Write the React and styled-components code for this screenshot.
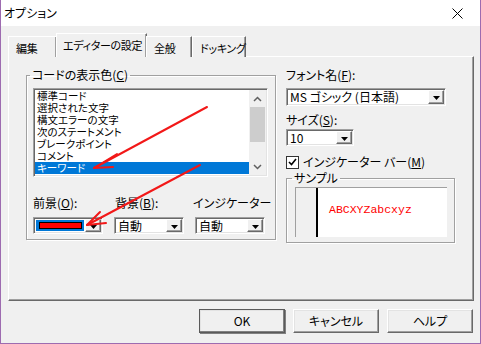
import React from "react";
import styled, { createGlobalStyle, css } from "styled-components";

const GlobalStyle = createGlobalStyle`
  body {
    margin: 0;
    overflow: hidden;
    background: #f0f0f0;
  }
`;

const uiFont = css`
  font-family: "Noto Sans CJK JP", "Noto Sans", sans-serif;
  font-feature-settings: "palt";
  font-size: 12px;
  line-height: 14px;
  color: #000;
`;

const Window = styled.div`
  position: relative;
  width: 481px;
  height: 344px;
  box-sizing: border-box;
  border: 1px solid #9d6bb0;
  border-top: none;
  background: #f0f0f0;
  display: flex;
  flex-direction: column;
  ${uiFont}
`;

const TitleBar = styled.div`
  height: 26px;
  flex: none;
  background: #fff;
  display: flex;
  align-items: center;
  justify-content: space-between;
  padding-left: 3px;
`;

const Title = styled.span`
  font-size: 12px;
`;

const Close = styled.div`
  width: 45px;
  height: 26px;
  display: flex;
  align-items: center;
  justify-content: center;
`;

const Body = styled.div`
  flex: 1;
  display: flex;
  flex-direction: column;
  padding: 7px 6px 0 7px;
`;

const TabRow = styled.div`
  display: flex;
  align-items: flex-end;
  height: 24px;
  margin-bottom: -1px;
  position: relative;
  z-index: 1;
`;

const Tab = styled.div`
  box-sizing: border-box;
  flex: none;
  width: ${(p) => p.$w}px;
  height: ${(p) => (p.$active ? 24 : 21)}px;
  margin: ${(p) => (p.$active ? "0 -1px" : "0")};
  background: #f0f0f0;
  border-top: 1px solid #fff;
  border-left: 1px solid #fff;
  border-right: 1px solid #696969;
  box-shadow: inset -1px 0 #a0a0a0;
  display: flex;
  align-items: ${(p) => (p.$active ? "flex-start" : "center")};
  padding-top: ${(p) => (p.$active ? 4 : 2)}px;
  padding-left: ${(p) => (p.$active ? 6 : 7)}px;
  white-space: nowrap;
  font-size: 11px;
  letter-spacing: -0.3px;
`;

const Panel = styled.div`
  box-sizing: border-box;
  height: 245px;
  border: 1px solid;
  border-color: #fff #696969 #696969 #fff;
  box-shadow: inset -1px -1px #a0a0a0;
  padding: 11px 0 0 17px;
  display: grid;
  grid-template-columns: 250px 170px;
  column-gap: 9px;
  align-items: start;
`;

const Group = styled.fieldset`
  margin: 0;
  min-width: 0;
  box-sizing: border-box;
  border: 1px solid #a0a0a0;
  box-shadow: inset 1px 1px #fff, 1px 1px #fff;
  padding: ${(p) => p.$pad};
  height: ${(p) => p.$h}px;
`;

const Legend = styled.legend`
  padding: 0 2px;
  margin-left: -3px;
  line-height: 14px;
`;

const U = styled.span`
  text-decoration: underline;
  text-underline-offset: 1px;
`;

const ListBox = styled.div`
  box-sizing: border-box;
  width: 235px;
  height: 89px;
  border: 1px solid;
  border-color: #a0a0a0 #fff #fff #a0a0a0;
  box-shadow: inset 1px 1px #696969, inset -1px -1px #e3e3e3;
  padding: 1px;
  background: #fff;
  display: flex;
`;

const Items = styled.div`
  flex: 1;
  overflow: hidden;
`;

const Item = styled.div`
  font-family: "Noto Sans CJK JP", monospace;
  font-size: 10.5px;
  line-height: 12px;
  height: 12px;
  padding-left: 2px;
  white-space: nowrap;
  background: ${(p) => (p.$selected ? "#0078d7" : "transparent")};
  color: ${(p) => (p.$selected ? "#fff" : "#000")};
`;

const ScrollBar = styled.div`
  width: 17px;
  background: #f0f0f0;
  display: flex;
  flex-direction: column;
`;

const ScrollButton = styled.div`
  height: 17px;
  display: flex;
  align-items: center;
  justify-content: center;
`;

const Track = styled.div`
  flex: 1;
  padding: 0 1px;
`;

const Thumb = styled.div`
  height: 35px;
  background: #cdcdcd;
`;

const ColorRow = styled.div`
  display: grid;
  grid-template-columns: repeat(3, 70px);
  column-gap: 11px;
  row-gap: 7px;
  margin-top: 19px;
`;

const Label = styled.div`
  white-space: nowrap;
  margin-left: ${(p) => p.$shift || 0}px;
`;

const Combo = styled.div`
  box-sizing: border-box;
  width: ${(p) => p.$w}px;
  height: ${(p) => p.$h || 17}px;
  border: 1px solid;
  border-color: #a0a0a0 #fff #fff #a0a0a0;
  box-shadow: inset 1px 1px #696969, inset -1px -1px #e3e3e3;
  padding: 2px;
  background: #fff;
  display: flex;
  align-items: stretch;
`;

const ComboText = styled.div`
  flex: 1;
  display: flex;
  align-items: center;
  padding-left: 1px;
  white-space: nowrap;
  background: ${(p) => (p.$focus ? "#0078d7" : "transparent")};
`;

const Swatch = styled.div`
  flex: 1;
  height: 5px;
  margin: 0 2px;
  border: 1px solid #000;
  background: ${(p) => p.color};
`;

const DropButton = styled.div`
  width: 16px;
  margin: -1px -1px -1px 1px;
  box-sizing: border-box;
  background: #f0f0f0;
  border: 1px solid;
  border-color: #fff #696969 #696969 #fff;
  box-shadow: inset -1px -1px #a0a0a0;
  display: flex;
  align-items: center;
  justify-content: center;
  padding-top: 2px;
`;

const RightCol = styled.div`
  display: flex;
  flex-direction: column;
  padding-left: 1px;
`;

const Spacer = styled.div`
  height: ${(p) => p.$h}px;
`;

const CheckRow = styled.div`
  display: flex;
  align-items: center;
  gap: 4px;
  margin-top: 9px;
`;

const CheckBox = styled.div`
  box-sizing: border-box;
  width: 13px;
  height: 13px;
  border: 1px solid #333;
  background: #fff;
  display: flex;
  align-items: center;
  justify-content: center;
`;

const SampleBox = styled.div`
  height: 49px;
  display: flex;
  background: #fff;
  border-top: 1px solid #a0a0a0;
  border-left: 1px solid #a0a0a0;
`;

const Gutter = styled.div`
  width: 20px;
  background: #f0f0f0;
  border-right: 2px solid #000;
`;

const SampleText = styled.div`
  font-family: "Liberation Mono", monospace;
  font-size: 11.5px;
  color: #ff0000;
  display: flex;
  align-items: center;
  padding-left: 11px;
  padding-bottom: 5px;
`;

const ButtonRow = styled.div`
  display: flex;
  justify-content: flex-end;
  gap: 8px;
  margin-top: 8px;
  padding-right: 1px;
`;

const Button = styled.div`
  box-sizing: border-box;
  width: 86px;
  height: 24px;
  background: #f0f0f0;
  border: 1px solid;
  border-color: #fff #696969 #696969 #fff;
  box-shadow: inset -1px -1px #a0a0a0, inset 1px 1px #e3e3e3;
  display: flex;
  align-items: center;
  justify-content: center;
  ${(p) =>
    p.$default &&
    css`
      outline: 1px solid #5a5a5a;
      outline-offset: -1px;
      border-color: #fff #404040 #404040 #fff;
      box-shadow: inset -1px -1px #808080, inset 1px 1px #e3e3e3, 1px 1px #808080;
    `}
`;

const Overlay = styled.svg`
  position: absolute;
  top: 0;
  left: -1px;
  pointer-events: none;
`;

const Chevron = ({ up }) => (
  <svg width="9" height="6" viewBox="0 0 9 6">
    <polyline
      points={up ? "1,5 4.5,1.5 8,5" : "1,1 4.5,4.5 8,1"}
      fill="none"
      stroke="#606060"
      strokeWidth="1.5"
    />
  </svg>
);

const DownTri = () => (
  <svg width="7" height="4" viewBox="0 0 7 4">
    <polygon points="0,0 7,0 3.5,4" fill="#000" />
  </svg>
);

const items = [
  "標準コード",
  "選択された文字",
  "構文エラーの文字",
  "次のステートメント",
  "ブレークポイント",
  "コメント",
  "キーワード",
];

const tabs = [
  { label: "編集", w: 49 },
  { label: "エディターの設定", w: 91, active: true },
  { label: "全般", w: 46 },
  { label: "ドッキング", w: 54 },
];

export default function App() {
  return (
    <>
      <GlobalStyle />
      <Window>
        <TitleBar>
          <Title>オプション</Title>
          <Close>
            <svg width="11" height="11" viewBox="0 0 11 11">
              <path d="M0.5 0.5 L10.5 10.5 M10.5 0.5 L0.5 10.5" stroke="#000" strokeWidth="1" />
            </svg>
          </Close>
        </TitleBar>
        <Body>
          <TabRow>
            {tabs.map((t) => (
              <Tab key={t.label} $w={t.w} $active={t.active}>
                {t.label}
              </Tab>
            ))}
          </TabRow>
          <Panel>
            <Group $pad="6px 6px 5px" $h={172}>
              <Legend>
                コードの表示色(<U>C</U>)
              </Legend>
              <ListBox>
                <Items>
                  {items.map((it, i) => (
                    <Item key={it} $selected={i === items.length - 1}>
                      {it}
                    </Item>
                  ))}
                </Items>
                <ScrollBar>
                  <ScrollButton>
                    <Chevron up />
                  </ScrollButton>
                  <Track>
                    <Thumb />
                  </Track>
                  <ScrollButton>
                    <Chevron />
                  </ScrollButton>
                </ScrollBar>
              </ListBox>
              <ColorRow>
                <Label>
                  前景(<U>O</U>):
                </Label>
                <Label $shift={1}>
                  背景(<U>B</U>):
                </Label>
                <Label $shift={-2}>インジケーター</Label>
                <Combo $w={70}>
                  <ComboText $focus>
                    <Swatch color="#ff0000" />
                  </ComboText>
                  <DropButton>
                    <DownTri />
                  </DropButton>
                </Combo>
                <Combo $w={70}>
                  <ComboText>自動</ComboText>
                  <DropButton>
                    <DownTri />
                  </DropButton>
                </Combo>
                <Combo $w={70}>
                  <ComboText>自動</ComboText>
                  <DropButton>
                    <DownTri />
                  </DropButton>
                </Combo>
              </ColorRow>
            </Group>
            <RightCol>
              <Label>
                フォント名(<U>F</U>):
              </Label>
              <Spacer $h={6} />
              <Combo $w={160} $h={18}>
                <ComboText>MS ゴシック (日本語)</ComboText>
                <DropButton>
                  <DownTri />
                </DropButton>
              </Combo>
              <Spacer $h={7} />
              <Label>
                サイズ(<U>S</U>):
              </Label>
              <Spacer $h={2} />
              <Combo $w={68}>
                <ComboText>10</ComboText>
                <DropButton>
                  <DownTri />
                </DropButton>
              </Combo>
              <CheckRow>
                <CheckBox>
                  <svg width="9" height="8" viewBox="0 0 9 8">
                    <polyline points="1,4 3.5,6.5 8,1" fill="none" stroke="#000" strokeWidth="1.6" />
                  </svg>
                </CheckBox>
                <span>
                  インジケーター バー(<U>M</U>)
                </span>
              </CheckRow>
              <Spacer $h={2} />
              <Group $pad="2px 7px 6px 8px" $h={72}>
                <Legend>サンプル</Legend>
                <SampleBox>
                  <Gutter />
                  <SampleText>ABCXYZabcxyz</SampleText>
                </SampleBox>
              </Group>
            </RightCol>
          </Panel>
          <ButtonRow>
            <Button $default>OK</Button>
            <Button>キャンセル</Button>
            <Button>ヘルプ</Button>
          </ButtonRow>
        </Body>
        <Overlay width="481" height="344" viewBox="0 0 481 344">
          <g stroke="#f21818" strokeWidth="2" fill="none" strokeLinecap="round">
            <path d="M207 107 L94 168" />
            <path d="M94 168 L117 154 M94 168 L113 167" />
            <path d="M200 165 L87 225" />
            <path d="M87 225 L100 212 M87 225 L106 223" />
          </g>
        </Overlay>
      </Window>
    </>
  );
}
